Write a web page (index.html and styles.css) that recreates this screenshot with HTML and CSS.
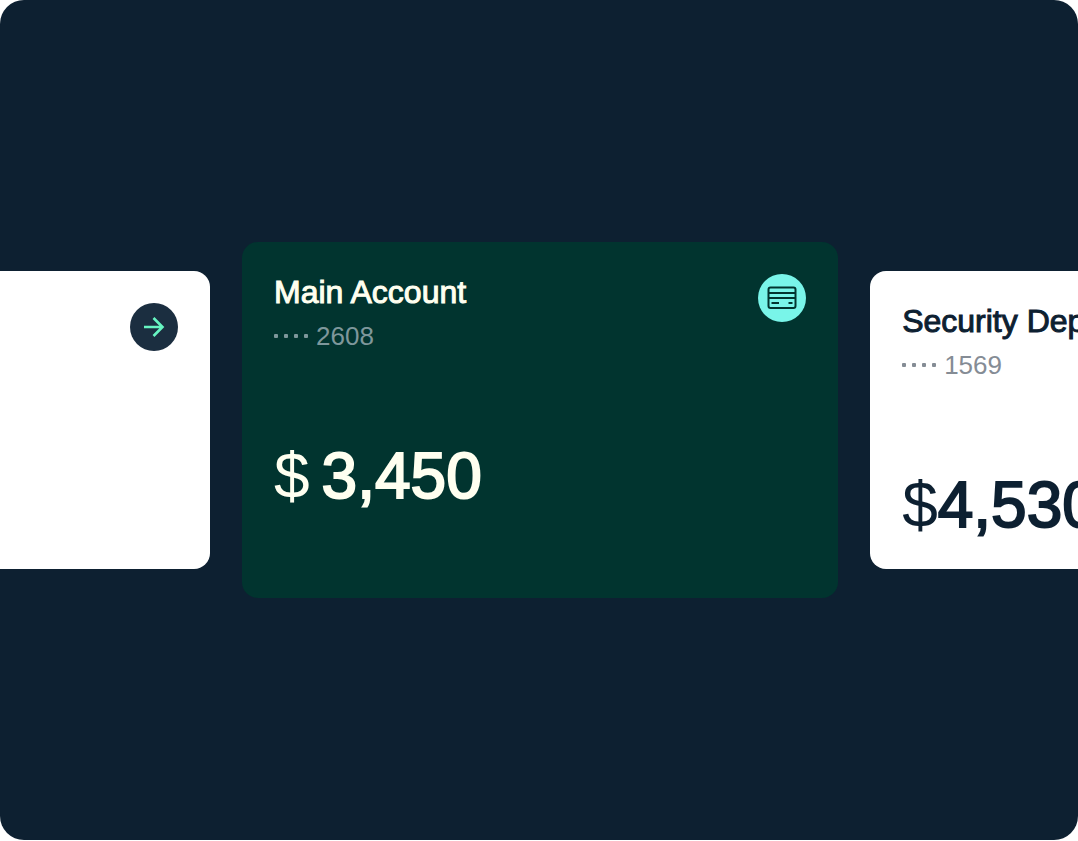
FILE: index.html
```html
<!DOCTYPE html>
<html lang="en">
<head>
  <meta charset="UTF-8" />
  <meta name="viewport" content="width=device-width, initial-scale=1" />
  <title>Accounts</title>
  <link rel="stylesheet" href="styles.css">
</head>
<body>
  <main class="stage">
    <section class="card card-light card-prev">
      <button class="badge badge-dark" type="button" aria-label="Next account">
        <svg width="24" height="24" viewBox="0 0 24 24" fill="none" stroke="currentColor" stroke-width="2.6">
          <path d="M2 12H20.5M11.500 3L20.500 12L11.500 21" />
        </svg>
      </button>
    </section>

    <section class="card card-main">
      <div class="card-info">
        <h2 class="card-title">Main Account</h2>
        <p class="card-number">
          <span class="dots"><i></i><i></i><i></i><i></i></span>
          2608
        </p>
        <p class="balance"><span class="currency">$</span><span>3,450</span></p>
      </div>
      <span class="badge badge-mint">
        <svg width="30" height="24" viewBox="0 0 30 24" fill="none" stroke="currentColor" stroke-width="2">
          <rect x="1.5" y="1.5" width="27" height="20.5" rx="2" />
          <path d="M2 7H28M2 12H28M4.500 17H12M21.500 17H25.500" />
        </svg>
      </span>
    </section>

    <section class="card card-light">
      <div class="card-info">
        <h2 class="card-title">Security Deposit</h2>
        <p class="card-number">
          <span class="dots"><i></i><i></i><i></i><i></i></span>
          1569
        </p>
        <p class="balance balance-tight"><span class="currency">$</span><span>4,530</span></p>
      </div>
    </section>
  </main>
</body>
</html>
```
FILE: styles.css
```css
* {
  box-sizing: border-box;
}
body {
  margin: 0;
  background: #fff;
  font-family: "Liberation Sans", Arial, sans-serif;
}
h2, p {
  margin: 0;
}
.stage {
  height: calc(100vh - 1px);
  min-height: 420px;
  display: grid;
  grid-template-columns: 46.2% 55.3% 46%;
  gap: 32px;
  justify-content: center;
  align-items: center;
  overflow: hidden;
  background: #0d2031;
  border-radius: 24px;
}
.card {
  display: flex;
  justify-content: space-between;
  align-items: flex-start;
  padding: 32px 32px 24px;
  border-radius: 16px;
}
.card-light {
  min-height: 298px;
  background: #fff;
  color: #0d2031;
}
.card-prev {
  justify-content: flex-end;
}
.card-main {
  min-height: 356px;
  background: #01342f;
  color: #fffff0;
}
/* thin stroke gives a medium weight */
.card-title {
  font-size: 32px;
  line-height: 36px;
  font-weight: 400;
  white-space: nowrap;
  -webkit-text-stroke: 1px currentColor;
}
.card-number {
  display: flex;
  align-items: center;
  gap: 8px;
  margin-top: 8px;
  font-size: 26px;
  line-height: 36px;
  color: #858c95;
}
.card-main .card-number {
  color: #7e979b;
}
.dots {
  display: flex;
  gap: 6px;
}
.dots i {
  width: 4px;
  height: 4px;
  border-radius: 1px;
  background: currentColor;
}
.balance {
  display: flex;
  gap: 12px;
  margin-top: 84px;
  font-size: 64px;
  line-height: 76px;
  -webkit-text-stroke: 2px currentColor;
}
.balance-tight {
  gap: 0;
}
.currency {
  -webkit-text-stroke: 0;
}
.badge {
  display: flex;
  align-items: center;
  justify-content: center;
  flex: none;
  width: 48px;
  height: 48px;
  padding: 0;
  border: none;
  border-radius: 50%;
}
.badge-dark {
  background: #1b2e40;
  color: #67f5c2;
  cursor: pointer;
}
.badge-mint {
  background: #79f5e9;
  color: #01342f;
}
```
